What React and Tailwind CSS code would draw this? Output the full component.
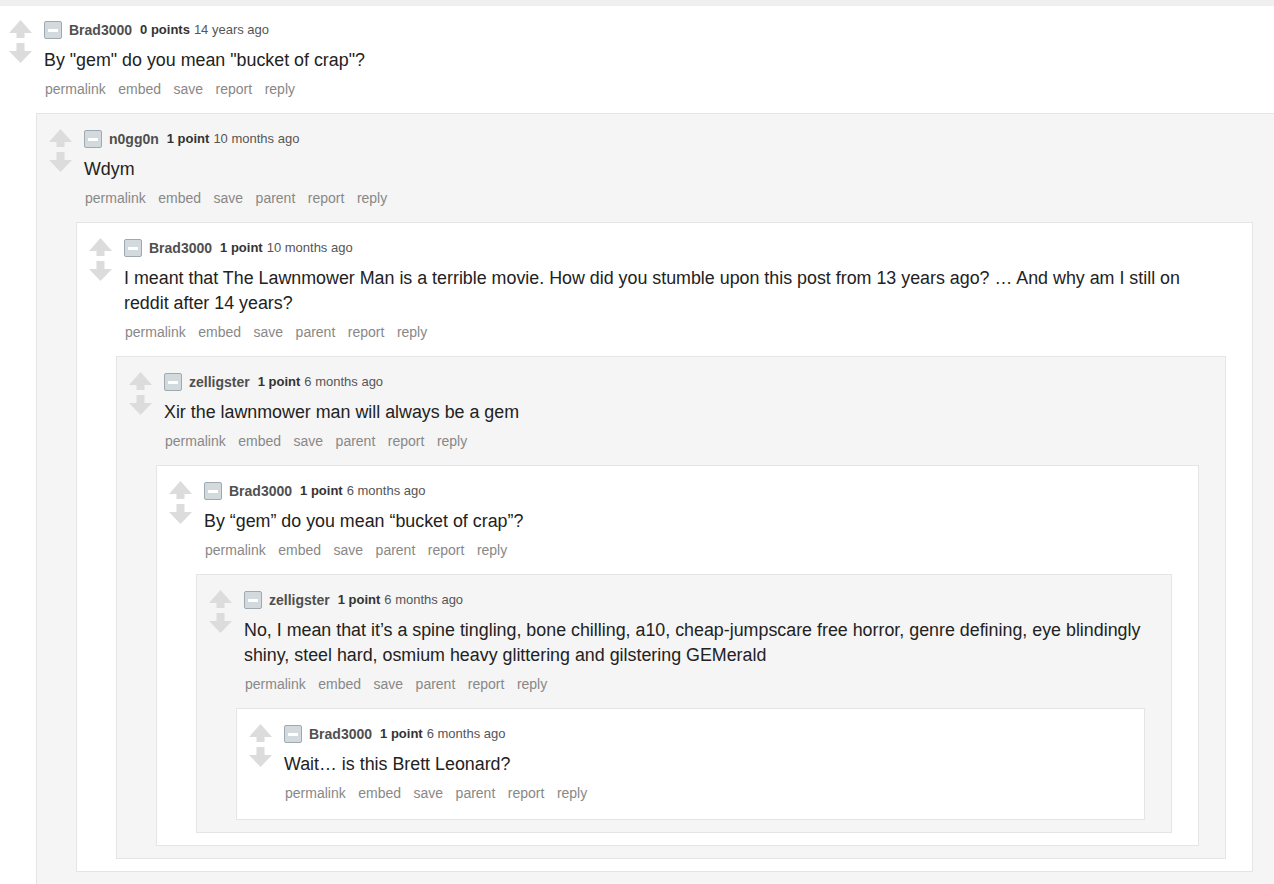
const thread = {
  author: "Brad3000",
  points: "0 points",
  time: "14 years ago",
  body: 'By "gem" do you mean "bucket of crap"?',
  top: true,
  reply: {
    author: "n0gg0n",
    points: "1 point",
    time: "10 months ago",
    body: "Wdym",
    reply: {
      author: "Brad3000",
      points: "1 point",
      time: "10 months ago",
      body: "I meant that The Lawnmower Man is a terrible movie. How did you stumble upon this post from 13 years ago? … And why am I still on reddit after 14 years?",
      reply: {
        author: "zelligster",
        points: "1 point",
        time: "6 months ago",
        body: "Xir the lawnmower man will always be a gem",
        reply: {
          author: "Brad3000",
          points: "1 point",
          time: "6 months ago",
          body: "By “gem” do you mean “bucket of crap”?",
          reply: {
            author: "zelligster",
            points: "1 point",
            time: "6 months ago",
            body: "No, I mean that it’s a spine tingling, bone chilling, a10, cheap-jumpscare free horror, genre defining, eye blindingly shiny, steel hard, osmium heavy glittering and gilstering GEMerald",
            reply: {
              author: "Brad3000",
              points: "1 point",
              time: "6 months ago",
              body: "Wait… is this Brett Leonard?",
            },
          },
        },
      },
    },
  },
};

function Arrows() {
  return (
    <svg width="23" height="43" viewBox="0 0 23 43" className="mt-[-1px] block">
      <path fill="#dcdcdc" d="M11.5 0L23 13H15.5V18H7.5V13H0Z" />
      <path fill="#dcdcdc" d="M7.5 23H15.5V31H23L11.5 43L0 31H7.5Z" />
    </svg>
  );
}

function Comment({ c, depth }) {
  const links = c.top
    ? ["permalink", "embed", "save", "report", "reply"]
    : ["permalink", "embed", "save", "parent", "report", "reply"];

  return (
    <div className="flex">
      <div className="w-[35px] shrink-0">
        <Arrows />
      </div>
      <div className="flex-1 min-w-0">
        <div className="flex items-center h-[18px]">
          <span className="w-[18px] h-[18px] rounded-[2px] border border-[#9fa9b1] bg-[#d3dade] flex items-center justify-center shrink-0">
            <span className="w-[10px] h-[3px] bg-white" />
          </span>
          <span className="ml-[7px] mr-[8px] text-[14px] font-bold text-[#4f4f4f]">{c.author}</span>
          <span className="text-[13px] font-bold text-[#333]">{c.points}</span>
          <span className="ml-[4px] text-[13px] text-[#555]">{c.time}</span>
        </div>
        <p className="mt-[9px] text-[17.85px] leading-[25px] text-[#222]">{c.body}</p>
        <div className="mt-[6px] mb-[4px] ml-[1px] flex gap-[12.5px] h-[20px] text-[14px] leading-[20px] text-[#888]">
          {links.map((l) => (
            <a key={l}>{l}</a>
          ))}
        </div>
        {c.reply && (
          <div
            className={
              "mt-[14px] ml-[-8px] border border-[#e5e5e5] pt-[16px] pl-[12px] pr-[26px] pb-[12px] " +
              (depth % 2 === 0 ? "bg-[#f5f5f5]" : "bg-white")
            }
          >
            <Comment c={c.reply} depth={depth + 1} />
          </div>
        )}
      </div>
    </div>
  );
}

export default function App() {
  return (
    <div className="w-full overflow-hidden bg-white font-['Liberation_Sans',Arial,sans-serif]">
      <div className="h-[6px] bg-[#efefef]" />
      <div className="w-[1280px] pt-[15px] pl-[9px]">
        <Comment c={thread} depth={0} />
      </div>
    </div>
  );
}
